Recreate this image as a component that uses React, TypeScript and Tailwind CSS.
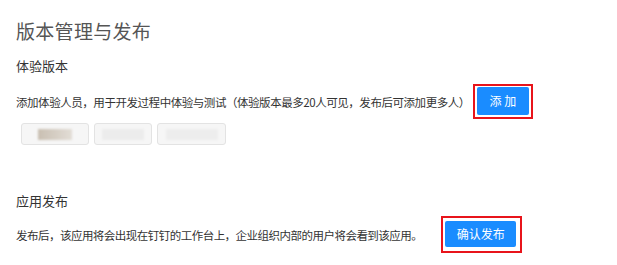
import React from 'react';

const font = { fontFamily: '"Noto Sans CJK SC", "Liberation Sans", sans-serif' };

// Testers whose names are blurred out in the screenshot
const testers = [
  { id: 1, width: 'w-[68px]', blur: 'w-[34px] bg-gradient-to-r from-[#c9bfb2] to-[#e2ddd6]' },
  { id: 2, width: 'w-[58px]', blur: 'w-[42px] bg-[#ececec]' },
  { id: 3, width: 'w-[69px]', blur: 'w-[52px] bg-[#ededed]' },
];

export default function App() {
  return (
    <div className="w-[617px] h-[265px] bg-white pl-4 text-[#333]" style={font}>
      <h1 className="pt-[18px] text-[19px] leading-[26px] text-[#555] font-normal tracking-[0.3px]">
        版本管理与发布
      </h1>

      {/* 体验版本 */}
      <h2 className="mt-[13px] text-[13px] leading-[18px] text-[#333]">体验版本</h2>
      <div className="mt-[9px] flex items-center">
        <p className="text-[11.5px] leading-[16px] tracking-[-0.45px] text-[#333]">
          添加体验人员，用于开发过程中体验与测试（体验版本最多20人可见，发布后可添加更多人）
        </p>
        <div className="ml-[3px] border-2 border-[#e8141b] pl-[2px] pr-[2px] pt-[1px] pb-[2px]">
          <button className="w-[52px] h-[28px] rounded-[2px] bg-[#1a8cff] text-white text-[12px] leading-none">
            添 加
          </button>
        </div>
      </div>
      <div className="mt-[4px] ml-[5px] flex gap-[5px]">
        {testers.map((t) => (
          <div
            key={t.id}
            className={`${t.width} h-[22px] rounded-[3px] border border-[#e3e3e3] bg-[#f6f6f6] flex items-center justify-center`}
          >
            <div className={`${t.blur} h-[11px] blur-[1px]`} />
          </div>
        ))}
      </div>

      {/* 应用发布 */}
      <h2 className="mt-[47px] text-[13px] leading-[18px] text-[#333]">应用发布</h2>
      <div className="mt-[6px] flex items-center">
        <p className="text-[11.5px] leading-[16px] tracking-[-0.52px] text-[#333]">
          发布后，该应用将会出现在钉钉的工作台上，企业组织内部的用户将会看到该应用。
        </p>
        <div className="ml-[19px] border-2 border-[#e8141b] pl-[2px] pr-[4px] pt-[2px] pb-[4px]">
          <button className="w-[71px] h-[26px] rounded-[2px] bg-[#1a8cff] text-white text-[12px] leading-none">
            确认发布
          </button>
        </div>
      </div>
    </div>
  );
}
